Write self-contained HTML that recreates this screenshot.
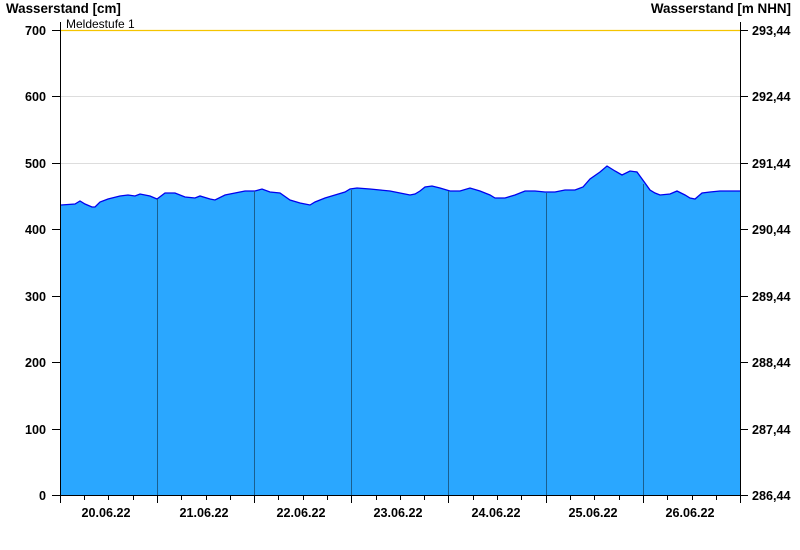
<!DOCTYPE html>
<html><head><meta charset="utf-8"><style>
html,body{margin:0;padding:0;background:#fff;width:800px;height:550px;overflow:hidden}
svg{display:block}
text{font-family:"Liberation Sans",Arial,sans-serif;font-weight:bold;font-size:12.6px;fill:#000}
</style></head><body>
<svg width="800" height="550" viewBox="0 0 800 550" xmlns="http://www.w3.org/2000/svg">
<g stroke="#dddddd" stroke-width="1">
<line x1="60" y1="96.5" x2="740" y2="96.5"/><line x1="60" y1="163.5" x2="740" y2="163.5"/>
<line x1="60" y1="229.5" x2="740" y2="229.5"/><line x1="60" y1="296.5" x2="740" y2="296.5"/>
<line x1="60" y1="362.5" x2="740" y2="362.5"/><line x1="60" y1="429.5" x2="740" y2="429.5"/>
</g>
<line x1="60" y1="30.5" x2="740" y2="30.5" stroke="#f5c400" stroke-width="1.2"/>
<text x="66" y="28" style="font-weight:normal;font-size:12px">Meldestufe 1</text>
<polygon fill="#2aa7ff" points="61,495 61,205 75,204 80,201 85,204 92,207 95,207 100,202 108,199 120,196 128,195 135,196 140,194 150,196 157,199 165,193 175,193 185,197 195,198 200,196 210,199 215,200 225,195 235,193 245,191 255,191 262,189 270,192 280,193 290,200 300,203 310,205 315,202 325,198 335,195 345,192 350,189 357,188 370,189 380,190 390,191 400,193 410,195 415,194 420,191 425,187 432,186 440,188 450,191 460,191 470,188 480,191 490,195 495,198 505,198 515,195 525,191 535,191 545,192 555,192 565,190 575,190 583,187 590,179 600,172 607,166 615,171 622,175 630,171 637,172 645,183 650,190 655,193 660,195 670,194 677,191 685,195 690,198 695,199 702,193 710,192 720,191 730,191 740,191 740,495"/>
<polyline fill="none" stroke="#0000ee" stroke-width="1.3" points="61,205 75,204 80,201 85,204 92,207 95,207 100,202 108,199 120,196 128,195 135,196 140,194 150,196 157,199 165,193 175,193 185,197 195,198 200,196 210,199 215,200 225,195 235,193 245,191 255,191 262,189 270,192 280,193 290,200 300,203 310,205 315,202 325,198 335,195 345,192 350,189 357,188 370,189 380,190 390,191 400,193 410,195 415,194 420,191 425,187 432,186 440,188 450,191 460,191 470,188 480,191 490,195 495,198 505,198 515,195 525,191 535,191 545,192 555,192 565,190 575,190 583,187 590,179 600,172 607,166 615,171 622,175 630,171 637,172 645,183 650,190 655,193 660,195 670,194 677,191 685,195 690,198 695,199 702,193 710,192 720,191 730,191 740,191"/>
<g stroke="#1a5f8f" stroke-width="1">
<line x1="157.5" y1="199" x2="157.5" y2="495"/><line x1="254.5" y1="191" x2="254.5" y2="495"/>
<line x1="351.5" y1="190" x2="351.5" y2="495"/><line x1="448.5" y1="191" x2="448.5" y2="495"/>
<line x1="546.5" y1="193" x2="546.5" y2="495"/><line x1="643.5" y1="184" x2="643.5" y2="495"/>
</g>
<g stroke="#000" stroke-width="1">
<line x1="60.5" y1="22" x2="60.5" y2="503"/>
<line x1="740.5" y1="22" x2="740.5" y2="495"/>
<line x1="52" y1="495.5" x2="740" y2="495.5"/>
<line x1="52" y1="30.5" x2="60" y2="30.5"/><line x1="52" y1="96.5" x2="60" y2="96.5"/>
<line x1="52" y1="163.5" x2="60" y2="163.5"/><line x1="52" y1="229.5" x2="60" y2="229.5"/>
<line x1="52" y1="296.5" x2="60" y2="296.5"/><line x1="52" y1="362.5" x2="60" y2="362.5"/>
<line x1="52" y1="429.5" x2="60" y2="429.5"/>
<line x1="740" y1="30.5" x2="748" y2="30.5"/><line x1="740" y1="96.5" x2="748" y2="96.5"/>
<line x1="740" y1="163.5" x2="748" y2="163.5"/><line x1="740" y1="229.5" x2="748" y2="229.5"/>
<line x1="740" y1="296.5" x2="748" y2="296.5"/><line x1="740" y1="362.5" x2="748" y2="362.5"/>
<line x1="740" y1="429.5" x2="748" y2="429.5"/><line x1="740" y1="495.5" x2="748" y2="495.5"/>
<line x1="157.5" y1="495" x2="157.5" y2="503"/><line x1="254.5" y1="495" x2="254.5" y2="503"/>
<line x1="351.5" y1="495" x2="351.5" y2="503"/><line x1="448.5" y1="495" x2="448.5" y2="503"/>
<line x1="546.5" y1="495" x2="546.5" y2="503"/><line x1="643.5" y1="495" x2="643.5" y2="503"/>
<line x1="740.5" y1="495" x2="740.5" y2="503"/>
<line x1="84.5" y1="495" x2="84.5" y2="500"/><line x1="108.5" y1="495" x2="108.5" y2="500"/><line x1="133.5" y1="495" x2="133.5" y2="500"/>
<line x1="181.5" y1="495" x2="181.5" y2="500"/><line x1="206.5" y1="495" x2="206.5" y2="500"/><line x1="230.5" y1="495" x2="230.5" y2="500"/>
<line x1="278.5" y1="495" x2="278.5" y2="500"/><line x1="303.5" y1="495" x2="303.5" y2="500"/><line x1="327.5" y1="495" x2="327.5" y2="500"/>
<line x1="376.5" y1="495" x2="376.5" y2="500"/><line x1="400.5" y1="495" x2="400.5" y2="500"/><line x1="424.5" y1="495" x2="424.5" y2="500"/>
<line x1="473.5" y1="495" x2="473.5" y2="500"/><line x1="497.5" y1="495" x2="497.5" y2="500"/><line x1="521.5" y1="495" x2="521.5" y2="500"/>
<line x1="570.5" y1="495" x2="570.5" y2="500"/><line x1="594.5" y1="495" x2="594.5" y2="500"/><line x1="619.5" y1="495" x2="619.5" y2="500"/>
<line x1="667.5" y1="495" x2="667.5" y2="500"/><line x1="692.5" y1="495" x2="692.5" y2="500"/><line x1="716.5" y1="495" x2="716.5" y2="500"/>
</g>
<text x="6" y="13" style="font-size:13.4px">Wasserstand [cm]</text>
<text x="791" y="13" text-anchor="end" style="font-size:13.4px">Wasserstand [m NHN]</text>
<g text-anchor="end">
<text x="46" y="35">700</text><text x="46" y="101">600</text><text x="46" y="168">500</text>
<text x="46" y="234">400</text><text x="46" y="301">300</text><text x="46" y="367">200</text>
<text x="46" y="434">100</text><text x="46" y="500">0</text>
</g>
<g>
<text x="752" y="35">293,44</text><text x="752" y="101">292,44</text><text x="752" y="168">291,44</text>
<text x="752" y="234">290,44</text><text x="752" y="301">289,44</text><text x="752" y="367">288,44</text>
<text x="752" y="434">287,44</text><text x="752" y="500">286,44</text>
</g>
<g text-anchor="middle">
<text x="106" y="517">20.06.22</text><text x="204" y="517">21.06.22</text><text x="301" y="517">22.06.22</text>
<text x="398" y="517">23.06.22</text><text x="496" y="517">24.06.22</text><text x="593" y="517">25.06.22</text>
<text x="690" y="517">26.06.22</text>
</g>
</svg>
</body></html>
